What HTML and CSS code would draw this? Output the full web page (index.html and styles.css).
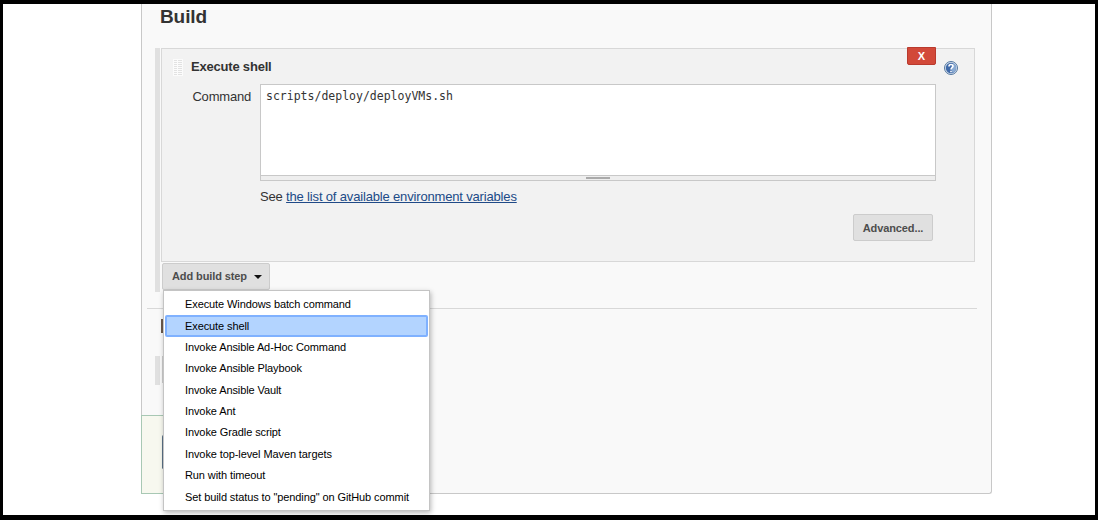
FILE: index.html
```
<!DOCTYPE html>
<html lang="en">
<head>
<meta charset="utf-8">
<title>Build configuration</title>
<link rel="stylesheet" href="styles.css">
</head>
<body>
<main class="frame">
  <section class="panel">
    <h2 class="section-title">Build</h2>
    <div class="step-list">
      <div class="drag-bar"></div>
      <div class="step-content">
        <div class="step">
          <header class="step-header">
            <svg class="grip" width="10" height="17" viewBox="0 0 10 17"><path fill="#fbfbfb" d="M0 0h10v17H0z"/><path stroke="#e2e2e2" stroke-width="1" d="M1 1.500h3M5 1.500h4M1 3.500h3M5 3.500h4M1 5.500h3M5 5.500h4M1 7.500h3M5 7.500h4M1 9.500h3M5 9.500h4M1 11.500h3M5 11.500h4M1 13.500h3M5 13.500h4M1 15.500h3M5 15.500h4"/></svg>
            <h3 class="step-title">Execute shell</h3>
            <button class="delete">X</button>
            <svg class="help" width="14" height="14" viewBox="0 0 14 14"><circle cx="7" cy="7" r="6.5" fill="#d5dfec" stroke="#54789f"/><circle cx="7" cy="7" r="5.2" fill="#3f69a8"/><path d="M9 2.200a5.200 5.200 0 0 1-.5 9.700L7 7z" fill="#89aad3"/><path d="M5 5.400C5 2.900 9 3 9 5.300 9 6.700 7 6.700 7 8.500M7 9.700v1.500" fill="none" stroke="#fff" stroke-width="1.600"/></svg>
          </header>
          <div class="field">
            <label class="label">Command</label>
            <div class="editor">
              <div class="code">scripts/deploy/deployVMs.sh</div>
              <div class="resizer"><span class="resizer-grip"></span></div>
            </div>
          </div>
          <p class="hint">See <a class="link" href="#">the list of available environment variables</a></p>
          <div class="step-footer"><button class="button advanced">Advanced...</button></div>
        </div>
        <div class="add-step">
          <button class="button add-button">Add build step<span class="caret"></span></button>
          <ul class="menu">
            <li class="item">Execute Windows batch command</li>
            <li class="item selected">Execute shell</li>
            <li class="item">Invoke Ansible Ad-Hoc Command</li>
            <li class="item">Invoke Ansible Playbook</li>
            <li class="item">Invoke Ansible Vault</li>
            <li class="item">Invoke Ant</li>
            <li class="item">Invoke Gradle script</li>
            <li class="item">Invoke top-level Maven targets</li>
            <li class="item">Run with timeout</li>
            <li class="item">Set build status to "pending" on GitHub commit</li>
          </ul>
        </div>
      </div>
    </div>
    <div class="divider"></div>
    <div class="heading-edge"></div>
    <div class="next-list"><div class="drag-bar"></div><div class="button-edge"></div></div>
    <div class="save-bar"><div class="save-edge"></div></div>
  </section>
</main>
</body>
</html>
```
FILE: styles.css
```
* { box-sizing: border-box; }
body { margin: 0; background: #fff; color: #333; font: 13px "Liberation Sans", Arial, sans-serif; }
h2, h3, p, ul { margin: 0; padding: 0; }
button { font-family: inherit; font-weight: bold; padding: 0; }

.frame { width: 1098px; height: 520px; border: solid #000; border-width: 4px 3px 5px; overflow: hidden; padding-left: 138px; }
.panel { width: 851px; height: 490px; background: #f9f9f9; border: 1px solid #c8c8c8; border-top: 0; border-radius: 0 0 3px 3px; display: flex; flex-direction: column; }
.section-title { height: 44px; padding-left: 18px; font-size: 19px; line-height: 25px; letter-spacing: -.1px; }

.step-list { display: flex; gap: 1px; height: 244px; padding-left: 13px; }
.drag-bar { width: 5px; background: #e0e0e0; }
.step { width: 814px; height: 214px; background: #f2f2f2; border: 1px solid #d8d8d8; }
.step-header { display: flex; align-items: flex-start; height: 35px; padding-left: 11px; }
.grip { margin-top: 10px; }
.step-title { margin-left: 8px; width: 716px; font-size: 13px; line-height: 35px; letter-spacing: -.2px; }
.delete { width: 29px; height: 18px; margin-top: -2px; background: #d24939; border: 1px solid #b93a2e; border-radius: 0 0 2px 2px; color: #fff; font-size: 11px; line-height: 15px; }
.help { margin: 12px 0 0 8px; }

.field { display: flex; }
.label { width: 98px; padding-right: 9px; text-align: right; line-height: 25px; letter-spacing: -.2px; }
.editor { width: 676px; height: 97px; border: 1px solid #c8c8c8; background: #fff; display: flex; flex-direction: column; }
.code { flex: 1; padding-left: 5px; font: 11.5px/23px "DejaVu Sans Mono", monospace; }
.resizer { height: 5px; border-top: 1px solid #c8c8c8; background: #eee; display: flex; justify-content: center; padding-top: 1px; }
.resizer-grip { width: 24px; height: 2px; background: #aaa; }
.hint { padding-left: 98px; line-height: 31px; height: 32px; letter-spacing: -.165px; }
.link { color: #204a87; text-decoration: underline; }
.step-footer { display: flex; justify-content: flex-end; padding-right: 41px; padding-top: 1px; }
.button { height: 27px; background: #e0e0e0; border: 1px solid #ccc; border-radius: 2px; color: #4d4d4d; font-size: 11px; }
.advanced { width: 80px; letter-spacing: -.1px; }

.add-step { position: relative; padding: 1px 0 0 1px; }
.add-button { width: 108px; display: flex; align-items: center; padding: 0 0 1px 9px; letter-spacing: -.1px; }
.caret { margin: 1px 0 0 7px; border: solid transparent; border-width: 4px 4px 0; border-top-color: #111; }
.menu { position: absolute; left: 2px; top: 28px; width: 267px; height: 221px; padding: 3px 1px; list-style: none; background: #fff; border: 1px solid #c4c4c4; box-shadow: 1px 2px 5px rgba(0,0,0,.28); color: #000; z-index: 2; }
.item { height: 21.4px; padding-left: 20px; font-size: 11px; line-height: 21.4px; white-space: nowrap; letter-spacing: -.1px; }
.selected { background: #b3d4ff; border: 2px solid #7fb1ff; border-radius: 2px; padding-left: 18px; line-height: 18px; }

.divider { height: 1px; margin: 16px 14px 0 5px; background: #d8d8d8; }
.heading-edge { width: 3px; height: 14px; margin: 10px 0 0 19px; background: #6b5a4b; }
.next-list { display: flex; gap: 2px; height: 29px; margin: 23px 0 0 13px; }
.button-edge { width: 2px; background: #ccc; height: 27px; }
.save-bar { width: 200px; height: 79px; margin: auto 0 -1px -1px; background: #f7f8ef; border: 1px solid #a8c8b4; padding: 19px 0 0 20px; }
.save-edge { width: 3px; height: 34px; background: #5b7187; border-radius: 2px; }
```
